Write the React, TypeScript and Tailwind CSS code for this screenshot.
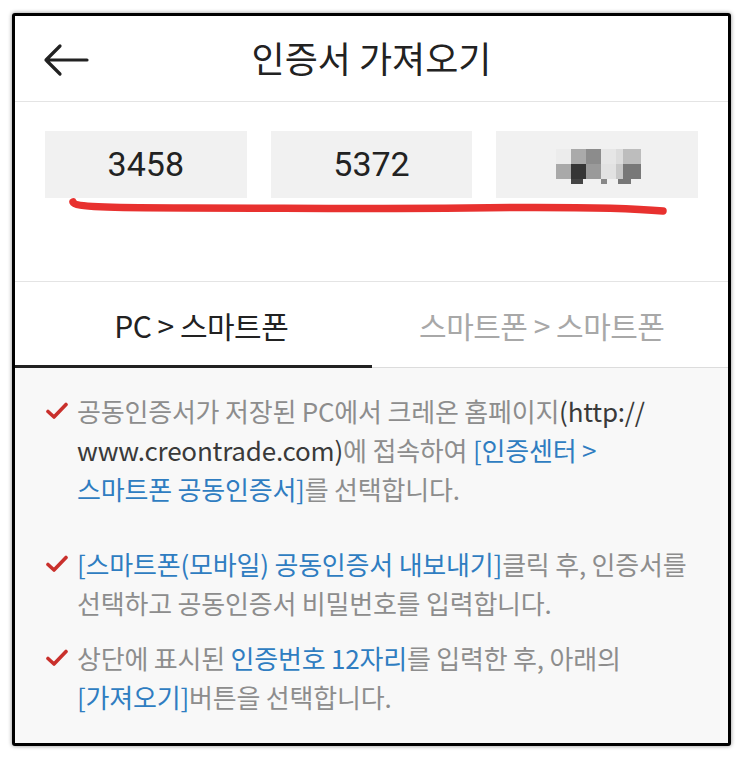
import React from "react";

const KR = { fontFamily: '"Noto Sans CJK KR", "Noto Sans", sans-serif' };

function Check() {
  return (
    <svg width="22" height="18" viewBox="0 0 22 18" className="shrink-0 mt-[11px]">
      <path d="M2 9.5 L8 15 L20 2.5" fill="none" stroke="#c9302c" strokeWidth="3.6" strokeLinecap="round" strokeLinejoin="round" />
    </svg>
  );
}

const G = ({ children }: { children: React.ReactNode }) => <span className="text-[#8d8d8d]">{children}</span>;
const B = ({ children }: { children: React.ReactNode }) => <span className="text-[#2f7dc1]">{children}</span>;
const D = ({ children }: { children: React.ReactNode }) => <span className="text-[#3a3a3a]">{children}</span>;

function Item({ children, className = "" }: { children: React.ReactNode; className?: string }) {
  return (
    <div className={"flex gap-[9px] " + className}>
      <Check />
      <div className="text-[26px] leading-[39px] tracking-[-0.2px] whitespace-nowrap">{children}</div>
    </div>
  );
}

function Pixelated() {
  const rows = [
    ["#ececec", "#aaaaaa", "#8c8c8c", "#e6e6e6", "#dcdcdc", "#bdbdbd"],
    ["#a9a9a9", "#363636", "#9a9a9a", "#e2e2e2", "#c8c8c8", "#787878"],
  ];
  const widths = [15, 15, 15, 15, 7, 18];
  return (
    <div className="flex flex-col">
      {rows.map((r, i) => (
        <div key={i} className="flex">
          {r.map((c, j) => (
            <div key={j} style={{ background: c, width: widths[j], height: 15 }} />
          ))}
        </div>
      ))}
      <div className="flex h-[5px]">
        <div className="w-[15px]" />
        <div className="w-[12px] bg-[#444]" />
        <div className="w-[18px]" />
        <div className="w-[6px] bg-[#888]" />
        <div className="w-[11px]" />
        <div className="w-[13px] bg-[#777]" />
      </div>
    </div>
  );
}

export default function App() {
  return (
    <div className="w-[743px] h-[759px] bg-white pt-[13px] pl-[12px]" style={KR}>
      <div className="w-[719px] h-[733px] border-[3px] border-black rounded-[3px] shadow-[0_0_4px_rgba(0,0,0,0.45)] bg-white flex flex-col overflow-hidden">
        {/* header */}
        <div className="h-[86px] shrink-0 border-b border-[#e4e4e4] flex items-center relative">
          <svg width="46" height="34" viewBox="0 0 46 34" className="absolute left-[28px] top-[27px]">
            <path d="M44 17 H3 M17 3 L3 17 L17 31" fill="none" stroke="#222" strokeWidth="3.2" strokeLinecap="round" strokeLinejoin="round" />
          </svg>
          <div className="w-full text-center text-[36px] text-[#222] pb-[4px]">인증서 가져오기</div>
        </div>

        {/* numbers */}
        <div className="h-[180px] shrink-0 border-b border-[#e4e4e4] px-[30px] pt-[29px] relative">
          <div className="flex gap-[24px]">
            <div className="flex-1 h-[67px] bg-[#f1f1f1] flex items-center justify-center text-[34px] text-[#222]" style={{ fontFamily: "Roboto, sans-serif" }}>3458</div>
            <div className="flex-1 h-[67px] bg-[#f1f1f1] flex items-center justify-center text-[34px] text-[#222]" style={{ fontFamily: "Roboto, sans-serif" }}>5372</div>
            <div className="flex-1 h-[67px] bg-[#f1f1f1] flex items-center justify-center">
              <div className="ml-[2px] mt-[4px]"><Pixelated /></div>
            </div>
          </div>
          <svg width="620" height="24" viewBox="0 0 620 24" className="absolute left-[52px] top-[94px]">
            <path d="M6 6 C 8 11, 40 12, 120 12 C 220 12, 300 13, 400 12 C 480 11, 560 12, 596 15" fill="none" stroke="#e8312f" strokeWidth="7.5" strokeLinecap="round" />
          </svg>
        </div>

        {/* tabs */}
        <div className="h-[86px] shrink-0 flex">
          <div className="flex-1 flex items-center justify-center border-b-[3px] border-[#222] text-[30px] text-[#222] tracking-[-0.5px] pl-[16px] pt-[4px]">PC &gt; 스마트폰</div>
          <div className="flex-1 flex items-center justify-center border-b border-[#dcdcdc] text-[30px] text-[#a8a8a8] tracking-[-0.5px] pr-[16px] pt-[2px]">스마트폰 &gt; 스마트폰</div>
        </div>

        {/* content */}
        <div className="flex-1 bg-[#f8f8f8] pl-[31px] pt-[23px]">
          <Item>
            <G>공동인증서가 저장된 PC에서 크레온 홈페이지</G><D>(http://</D>
            <br />
            <D>www.creontrade.com)</D><G>에 접속하여 </G><B>[인증센터 &gt;</B>
            <br />
            <B>스마트폰 공동인증서]</B><G>를 선택합니다.</G>
          </Item>
          <Item className="mt-[36px]">
            <B>[스마트폰(모바일) 공동인증서 내보내기]</B><G>클릭 후, 인증서를</G>
            <br />
            <G>선택하고 공동인증서 비밀번호를 입력합니다.</G>
          </Item>
          <Item className="mt-[16px]">
            <G>상단에 표시된 </G><B>인증번호 12자리</B><G>를 입력한 후, 아래의</G>
            <br />
            <B>[가져오기]</B><G>버튼을 선택합니다.</G>
          </Item>
        </div>
      </div>
    </div>
  );
}
